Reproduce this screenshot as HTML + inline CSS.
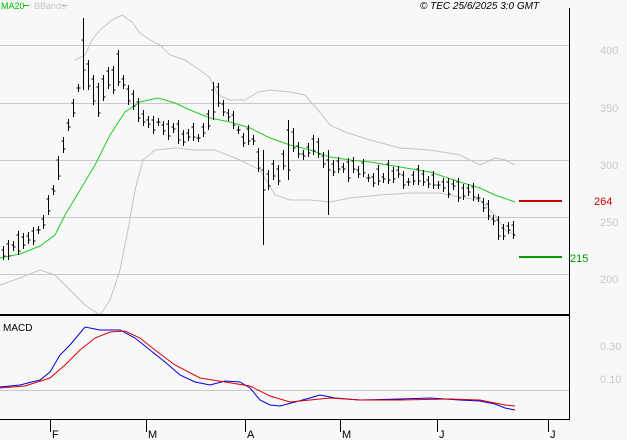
<!DOCTYPE html>
<html><head><meta charset="utf-8"><style>
html,body{margin:0;padding:0;background:#f8f8f8;width:627px;height:440px;overflow:hidden}
svg{display:block;font-family:"Liberation Sans",sans-serif}
</style></head><body>
<svg width="627" height="440" xmlns="http://www.w3.org/2000/svg">
<rect width="627" height="440" fill="#f8f8f8"/>
<g stroke="#c8c8c8" stroke-width="1">
<line x1="0" y1="45.5" x2="569" y2="45.5"/><line x1="0" y1="103.5" x2="569" y2="103.5"/>
<line x1="0" y1="160.5" x2="569" y2="160.5"/><line x1="0" y1="217.5" x2="569" y2="217.5"/>
<line x1="0" y1="274.5" x2="569" y2="274.5"/><line x1="0" y1="390.5" x2="569" y2="390.5"/>
</g>
<g fill="#c8c8c8" font-size="11">
<text x="600" y="54">400</text><text x="600" y="112">350</text><text x="600" y="169">300</text>
<text x="600" y="226">250</text><text x="600" y="283">200</text>
<text x="600" y="350">0.30</text><text x="600" y="383">0.10</text>
</g>
<polyline fill="none" stroke="#c4c4c4" points="75,60 85,55 92,40 100,30 112,20 122,15 132,22 140,33 150,40 160,45 170,55 185,60 200,70 210,78 218,95 230,100 245,100 258,92 270,90 290,92 305,95 318,110 330,125 345,132 370,140 400,148 430,150 460,155 480,165 495,158 505,160 515,165"/>
<polyline fill="none" stroke="#c4c4c4" points="0,285 20,278 40,270 55,275 70,290 85,305 100,315 110,300 120,270 128,230 135,190 143,160 155,150 175,148 195,150 215,150 240,160 260,170 275,195 290,200 310,200 330,202 350,198 380,195 410,193 440,193 460,197 480,200 495,215 505,230 515,235"/>
<polyline fill="none" stroke="#22cc22" points="0,258 20,254 40,246 55,235 65,215 80,190 95,165 110,135 125,112 140,102 158,98 175,103 190,110 210,118 230,122 250,128 270,138 290,145 310,150 330,157 350,160 370,162 400,167 430,172 460,182 480,188 495,195 515,202"/>
<path transform="translate(0.5,0)" fill="none" stroke="#000" stroke-width="1" d="
M3 246V260M1 250h2M3 256h2 M8 240V260M6 244h2M8 256h2 M13 241V251M11 245h2M13 247h2 M18 231V255M16 235h2M18 251h2
M23 233V249M21 237h2M23 245h2 M28 232V244M26 236h2M28 240h2 M33 227V245M31 231h2M33 241h2 M38 226V234M36 230h2M38 230h2
M43 215V229M41 219h2M43 225h2 M48 195V215M46 199h2M48 211h2 M53 185V195M51 189h2M53 191h2 M58 156V180M56 160h2M58 176h2
M63 137V153M61 141h2M63 149h2 M68 119V131M66 123h2M68 127h2 M73 99V117M71 103h2M73 113h2 M78 84V92M76 88h2M78 88h2
M83 18V90M81 40h2M83 70h2 M88 60V90M86 64h2M88 86h2 M93 75V105M91 79h2M93 101h2 M98 83V117M96 87h2M98 113h2
M103 75V101M101 79h2M103 97h2 M108 67V89M106 71h2M108 85h2 M113 66V94M111 70h2M113 90h2 M118 50V86M116 54h2M118 82h2
M123 75V89M121 79h2M123 85h2 M128 85V105M126 89h2M128 101h2 M133 90V110M131 94h2M133 106h2 M138 98V122M136 102h2M138 118h2
M143 110V126M141 114h2M143 122h2 M148 116V128M146 120h2M148 124h2 M153 116V134M151 120h2M153 130h2 M158 118V126M156 122h2M158 122h2
M163 121V135M161 125h2M163 131h2 M168 120V140M166 124h2M168 136h2 M173 123V133M171 127h2M173 129h2 M178 120V144M176 124h2M178 140h2
M183 130V146M181 134h2M183 142h2 M188 129V141M186 133h2M188 137h2 M193 123V141M191 127h2M193 137h2 M198 134V142M196 138h2M198 138h2
M203 123V137M201 127h2M203 133h2 M208 110V130M206 114h2M208 126h2 M213 82V120M211 90h2M213 112h2 M218 83V107M216 87h2M218 103h2
M223 100V116M221 104h2M223 112h2 M228 109V121M226 113h2M228 117h2 M233 111V129M231 115h2M233 125h2 M238 126V134M236 130h2M238 130h2
M243 133V147M241 137h2M243 143h2 M248 125V145M246 129h2M248 141h2 M253 135V145M251 139h2M253 141h2 M258 148V172M256 152h2M258 168h2
M263 150V245M261 170h2M263 190h2 M268 170V190M266 174h2M268 186h2 M273 160V180M271 164h2M273 176h2 M278 165V185M276 169h2M278 181h2
M283 150V170M281 154h2M283 166h2 M288 120V180M286 130h2M288 170h2 M293 128V152M291 132h2M293 148h2 M298 142V158M296 146h2M298 154h2
M303 150V160M301 154h2M303 156h2 M308 143V157M306 147h2M308 153h2 M313 135V155M311 139h2M313 151h2 M318 138V158M316 142h2M318 154h2
M323 152V168M321 156h2M323 164h2 M328 150V215M326 160h2M328 170h2 M333 160V176M331 164h2M333 172h2 M338 157V173M336 161h2M338 169h2
M343 163V173M341 167h2M343 169h2 M348 158V182M346 162h2M348 178h2 M353 157V173M351 161h2M353 169h2 M358 166V178M356 170h2M358 174h2
M363 159V177M361 163h2M363 173h2 M368 174V182M366 178h2M368 178h2 M373 173V187M371 177h2M373 183h2 M378 165V185M376 169h2M378 181h2
M383 173V183M381 177h2M383 179h2 M388 160V184M386 164h2M388 180h2 M393 167V183M391 171h2M393 179h2 M398 166V178M396 170h2M398 174h2
M403 171V189M401 175h2M403 185h2 M408 178V186M406 182h2M408 182h2 M413 171V185M411 175h2M413 181h2 M418 165V185M416 169h2M418 181h2
M423 170V186M421 174h2M423 182h2 M428 176V188M426 180h2M428 184h2 M433 171V189M431 175h2M433 185h2 M438 181V189M436 185h2M438 185h2
M443 178V192M441 182h2M443 188h2 M448 178V198M446 182h2M448 194h2 M453 180V190M451 184h2M453 186h2 M458 178V202M456 182h2M458 198h2
M463 184V200M461 188h2M463 196h2 M468 184V196M466 188h2M468 192h2 M473 183V201M471 187h2M473 197h2 M478 194V202M476 198h2M478 198h2
M483 198V212M481 202h2M483 208h2 M488 200V220M486 204h2M488 216h2 M493 215V225M491 219h2M493 221h2 M498 216V240M496 220h2M498 236h2
M503 224V240M501 228h2M503 236h2 M508 222V234M506 226h2M508 230h2 M513 221V239M511 225h2M513 235h2"/>
<line x1="569.5" y1="8" x2="569.5" y2="420" stroke="#000"/>
<line x1="0" y1="315" x2="570" y2="315" stroke="#000" stroke-width="2"/>
<line x1="0" y1="419.5" x2="570" y2="419.5" stroke="#000"/>
<g stroke="#000"><line x1="50.5" y1="419" x2="50.5" y2="432"/><line x1="146.5" y1="419" x2="146.5" y2="432"/><line x1="245.5" y1="419" x2="245.5" y2="432"/><line x1="340.5" y1="419" x2="340.5" y2="432"/><line x1="437.5" y1="419" x2="437.5" y2="432"/><line x1="548.5" y1="419" x2="548.5" y2="432"/></g>
<g font-size="11" fill="#000"><text x="52" y="438">F</text><text x="148" y="438">M</text><text x="247" y="438">A</text><text x="342" y="438">M</text><text x="439" y="438">J</text><text x="550" y="438">J</text></g>
<line x1="519" y1="201" x2="562" y2="201" stroke="#cc0000" stroke-width="2"/>
<text x="594" y="205" font-size="11" fill="#cc0000">264</text>
<line x1="519" y1="257" x2="562" y2="257" stroke="#009900" stroke-width="2"/>
<text x="570" y="262" font-size="11" fill="#009900">215</text>
<text x="1" y="9" font-size="9" fill="#00bb00">MA20</text><line x1="23" y1="5.5" x2="29" y2="5.5" stroke="#00bb00"/>
<text x="34" y="9" font-size="9" fill="#c4c4c4">BBands</text><line x1="61" y1="5.5" x2="68" y2="5.5" stroke="#c4c4c4"/>
<text x="420" y="9" font-size="10" font-style="italic" fill="#000">© TEC 25/6/2025 3:0 GMT</text>
<text x="3" y="331" font-size="10" fill="#000">MACD</text>
<polyline fill="none" stroke="#0000dd" points="0,387 20,385 40,380 50,372 60,355 70,345 85,327 100,330 120,330 135,338 150,350 165,362 180,375 195,382 210,385 225,381 240,382 250,388 260,400 270,405 280,406 295,402 310,398 320,395 335,398 360,400 400,399 430,398 460,400 480,401 495,404 505,408 515,410"/>
<polyline fill="none" stroke="#dd0000" points="0,388 25,386 50,378 65,365 80,350 95,338 110,332 125,331 140,338 155,350 175,365 200,378 225,382 250,386 270,396 290,402 310,400 330,398 360,400 400,400 450,399 480,400 495,403 505,405 515,406"/>
</svg>
</body></html>
